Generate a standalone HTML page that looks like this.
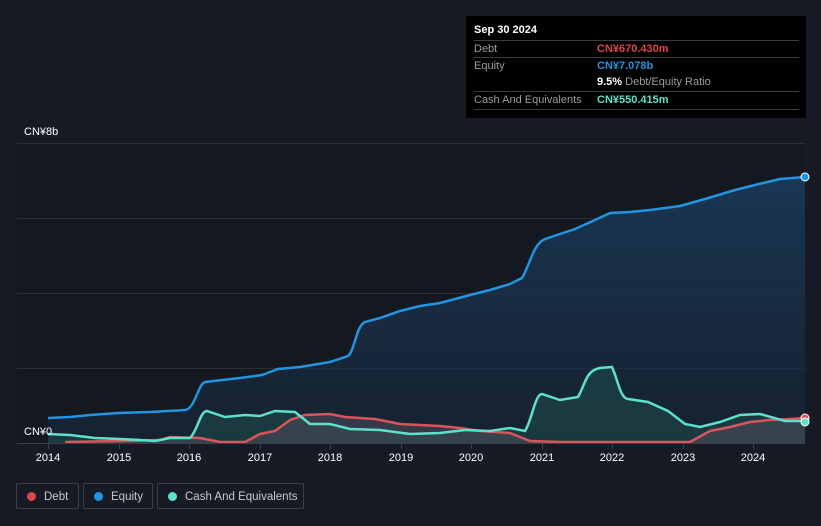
<!DOCTYPE html>
<html><head><meta charset="utf-8"><style>
html,body{margin:0;padding:0;background:#161b26;width:821px;height:526px;overflow:hidden;font-family:"Liberation Sans",Arial,sans-serif}
.tt{position:absolute;left:466px;top:16px;width:340px;height:102px;background:#000;color:#fff;font-size:11px}
.row{position:absolute;left:8px;width:325px;border-top:1px solid #3a3d44;height:17px;line-height:17px}
.lab{color:#9a9ca2;position:absolute;left:0}
.val{position:absolute;left:123px}
.leg{position:absolute;top:483px;height:26px;border:1px solid #3a3f4a;border-radius:2px;color:#c8cad0;font-size:11.5px;line-height:26px;box-sizing:border-box;white-space:nowrap;overflow:hidden}
.dot{display:inline-block;width:9px;height:9px;border-radius:50%;margin:0 8px 0 10px;vertical-align:-1px}
.ax{position:absolute;top:452px;color:#fff;font-size:11px;transform:translateX(-50%)}
</style></head><body>
<svg width="821" height="526" style="position:absolute;left:0;top:0">
<defs>
<linearGradient id="eg" x1="0" y1="0" x2="0" y2="1"><stop offset="0" stop-color="#1a3a5a" stop-opacity=".9"/><stop offset="1" stop-color="#17283a" stop-opacity=".6"/></linearGradient>
</defs>
<rect x="17" y="143" width="788" height="300" fill="#141821"/>
<g stroke="#2a2f38" stroke-width="1">
<line x1="17" y1="143.5" x2="805" y2="143.5"/><line x1="17" y1="218.5" x2="805" y2="218.5"/><line x1="17" y1="293.5" x2="805" y2="293.5"/><line x1="17" y1="368.5" x2="805" y2="368.5"/>
</g>
<path d="M48,418 L70,417 90,415 118,413 150,412 185,410 C195,409 198,384 205,382 L240,378 262,375 278,369 300,367 330,362 348,356 C355,350 356,326 365,322 L380,318 400,311 420,306 440,303 470,295 490,290 510,284 522,278 C530,265 533,244 545,239 L575,229 595,220 610,213 630,212 650,210 680,206 705,199 735,190 755,185 780,179 805,177 L805,443 48,443Z" fill="url(#eg)"/>
<path d="M48,434 L70,435 95,438 120,439 140,440 155,441 170,438 190,438 C198,430 200,411 207,411 L225,417 245,415 260,416 275,411 295,412 310,424 330,424 350,429 380,430 410,434 440,433 465,430 490,431 510,428 525,431 C532,420 535,394 542,394 L560,400 578,397 C585,385 586,370 600,368 L612,367 C618,380 620,398 628,399 L648,402 668,411 685,424 700,427 720,422 740,415 760,414 785,421 805,421 L805,443 48,443Z" fill="#1e4a4a" fill-opacity=".6"/>
<path d="M65,442 L120,441 160,440 170,437 200,438 220,442 245,442 260,434 275,431 290,420 305,415 330,414 345,417 375,419 400,424 440,426 460,428 480,431 510,433 530,441 560,442 690,442 710,431 730,427 750,422 770,420 790,419 805,418 L805,443 65,443Z" fill="#4a4a55" fill-opacity=".6"/>
<path d="M48,418 L70,417 90,415 118,413 150,412 185,410 C195,409 198,384 205,382 L240,378 262,375 278,369 300,367 330,362 348,356 C355,350 356,326 365,322 L380,318 400,311 420,306 440,303 470,295 490,290 510,284 522,278 C530,265 533,244 545,239 L575,229 595,220 610,213 630,212 650,210 680,206 705,199 735,190 755,185 780,179 805,177" fill="none" stroke="#2394e0" stroke-width="2.5"/>
<path d="M65,442 L120,441 160,440 170,437 200,438 220,442 245,442 260,434 275,431 290,420 305,415 330,414 345,417 375,419 400,424 440,426 460,428 480,431 510,433 530,441 560,442 690,442 710,431 730,427 750,422 770,420 790,419 805,418" fill="none" stroke="#d9555c" stroke-width="2.5"/>
<path d="M48,434 L70,435 95,438 120,439 140,440 155,441 170,438 190,438 C198,430 200,411 207,411 L225,417 245,415 260,416 275,411 295,412 310,424 330,424 350,429 380,430 410,434 440,433 465,430 490,431 510,428 525,431 C532,420 535,394 542,394 L560,400 578,397 C585,385 586,370 600,368 L612,367 C618,380 620,398 628,399 L648,402 668,411 685,424 700,427 720,422 740,415 760,414 785,421 805,421" fill="none" stroke="#5ee0cc" stroke-width="2.5"/>
<line x1="17" y1="443.5" x2="805" y2="443.5" stroke="#3a3f4a"/>
<g stroke="#3a3f4a"><line x1="48.5" y1="443" x2="48.5" y2="449"/><line x1="119.5" y1="443" x2="119.5" y2="449"/><line x1="189.5" y1="443" x2="189.5" y2="449"/><line x1="260.5" y1="443" x2="260.5" y2="449"/><line x1="330.5" y1="443" x2="330.5" y2="449"/><line x1="401.5" y1="443" x2="401.5" y2="449"/><line x1="471.5" y1="443" x2="471.5" y2="449"/><line x1="542.5" y1="443" x2="542.5" y2="449"/><line x1="612.5" y1="443" x2="612.5" y2="449"/><line x1="683.5" y1="443" x2="683.5" y2="449"/><line x1="753.5" y1="443" x2="753.5" y2="449"/></g>
<circle cx="805" cy="177" r="4" fill="#2394e0" stroke="#fff" stroke-width="1"/>
<circle cx="805" cy="418" r="4" fill="#d9555c" stroke="#fff" stroke-width="1"/>
<circle cx="805" cy="422" r="4" fill="#5ee0cc" stroke="#fff" stroke-width="1"/>
<text x="24" y="135" fill="#fff" font-size="11" font-family="Liberation Sans">CN¥8b</text>
<text x="24" y="435" fill="#fff" font-size="11" font-family="Liberation Sans">CN¥0</text>
</svg>
<div class="ax" style="left:48px">2014</div><div class="ax" style="left:119px">2015</div><div class="ax" style="left:189px">2016</div><div class="ax" style="left:260px">2017</div><div class="ax" style="left:330px">2018</div><div class="ax" style="left:401px">2019</div><div class="ax" style="left:471px">2020</div><div class="ax" style="left:542px">2021</div><div class="ax" style="left:612px">2022</div><div class="ax" style="left:683px">2023</div><div class="ax" style="left:753px">2024</div>
<div class="tt">
<div style="position:absolute;left:8px;top:8px;font-weight:bold">Sep 30 2024</div>
<div class="row" style="top:24px"><span class="lab">Debt</span><span class="val" style="color:#e0474c;font-weight:bold">CN¥670.430m</span></div>
<div class="row" style="top:41px"><span class="lab">Equity</span><span class="val" style="color:#2394e0;font-weight:bold">CN¥7.078b</span></div>
<div class="row" style="top:58px;border-top:none"><span class="val"><b>9.5%</b> <span style="color:#9a9ca2">Debt/Equity Ratio</span></span></div>
<div class="row" style="top:75px"><span class="lab">Cash And Equivalents</span><span class="val" style="color:#5ee0cc;font-weight:bold">CN¥550.415m</span></div>
<div class="row" style="top:93px;height:0"></div>
</div>
<div class="leg" style="left:16px;width:63px"><span class="dot" style="background:#e0474c"></span>Debt</div>
<div class="leg" style="left:83px;width:70px"><span class="dot" style="background:#2394e0"></span>Equity</div>
<div class="leg" style="left:157px;width:147px"><span class="dot" style="background:#5ee0cc"></span>Cash And Equivalents</div>
</body></html>
